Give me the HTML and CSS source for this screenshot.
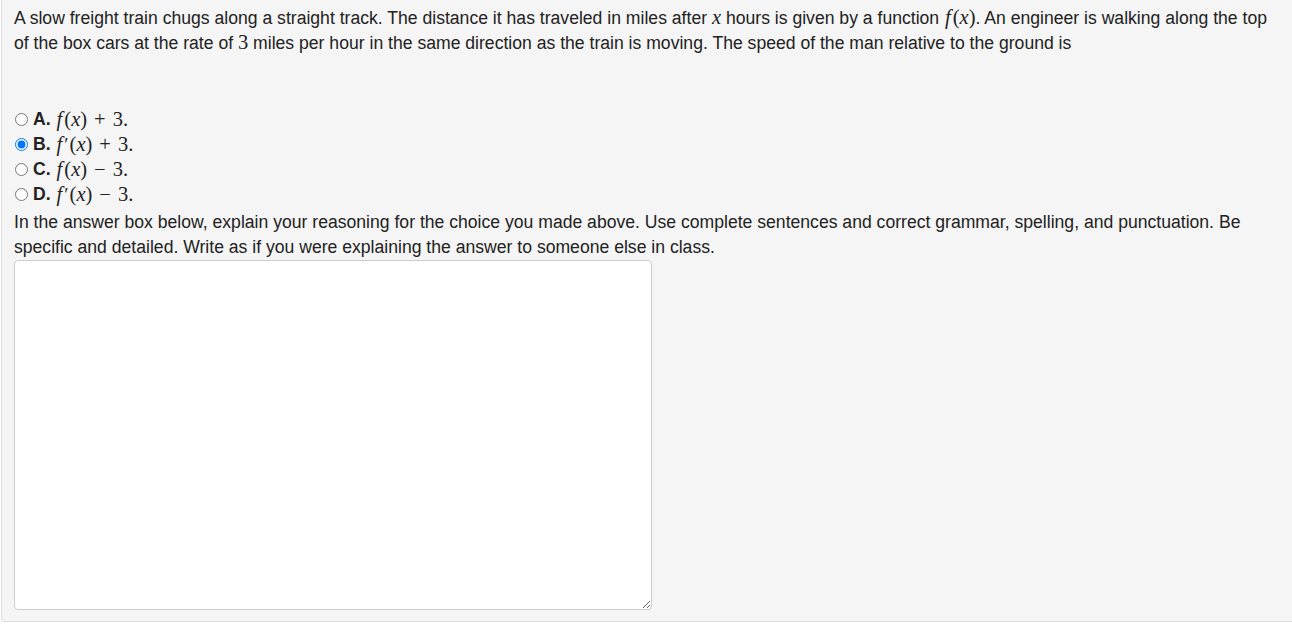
FILE: index.html
```html
<!DOCTYPE html>
<html lang="en">
<head>
  <meta charset="UTF-8" />
  <title>Question</title>
  <link rel="stylesheet" href="styles.css">
</head>
<body>
  <div class="panel">
    <p class="question">A slow freight train chugs along a straight track. The distance it has traveled in miles after <span class="math"><span class="mi">x</span></span> hours is given by a function <span class="math"><span class="mi f">f</span>(<span class="mi">x</span>)</span>. An engineer is walking along the top of the box cars at the rate of <span class="math">3</span> miles per hour in the same direction as the train is moving. The speed of the man relative to the ground is</p>

    <div class="options">
      <label class="option"><input type="radio" name="ans"><b>A.</b> <span class="math"><span class="mi f">f</span>(<span class="mi">x</span>)<span class="op">+</span>3.</span></label>
      <label class="option"><input type="radio" name="ans" checked><b>B.</b> <span class="math"><span class="mi f">f</span><span class="prime">′</span>(<span class="mi">x</span>)<span class="op">+</span>3.</span></label>
      <label class="option"><input type="radio" name="ans"><b>C.</b> <span class="math"><span class="mi f">f</span>(<span class="mi">x</span>)<span class="op">−</span>3.</span></label>
      <label class="option"><input type="radio" name="ans"><b>D.</b> <span class="math"><span class="mi f">f</span><span class="prime">′</span>(<span class="mi">x</span>)<span class="op">−</span>3.</span></label>
    </div>

    <p class="prompt">In the answer box below, explain your reasoning for the choice you made above. Use complete sentences and correct grammar, spelling, and punctuation. Be specific and detailed. Write as if you were explaining the answer to someone else in class.</p>
    <textarea class="answer"></textarea>
  </div>
</body>
</html>
```

FILE: styles.css
```css
body {
  margin: 0;
  font-family: 'Liberation Sans', Arial, sans-serif;
  font-size: 17.6px;
  color: #222;
  background: #fff;
}
.panel {
  background: #f5f5f5;
  border-left: 1px solid #ddd;
  border-bottom: 1px solid #ddd;
  border-bottom-left-radius: 4px;
  margin-left: 1px;
  padding: 6px 0 11px 12px;
  box-sizing: border-box;
  height: 622px;
}
.question, .prompt {
  margin: 0;
  line-height: 25px;
  padding-right: 6px;
}
.question {
  margin-bottom: 51px;
}
.math {
  font-family: 'Liberation Serif', 'Times New Roman', serif;
  font-size: 20.5px;
  line-height: 1;
}
.mi {
  font-style: italic;
}
.mi.f {
  margin: 0 2px 0 1px;
}
.prime {
  font-size: 0.95em;
  margin-right: 1px;
}
.op {
  margin: 0 7px;
}
.options {
  display: flex;
  flex-direction: column;
}
.option {
  height: 25px;
  display: flex;
  align-items: center;
  gap: 3px;
}
.option input {
  margin: 0 2px 0 1px;
  width: 13px;
  height: 13px;
}
.option b {
  font-weight: bold;
  margin-right: 2px;
}
.prompt {
  margin-top: 3px;
}
.answer {
  display: block;
  margin-top: 0;
  width: 638px;
  height: 350px;
  box-sizing: border-box;
  border: 1px solid #ccc;
  border-radius: 4px;
  background: #fff;
  resize: both;
}
```
